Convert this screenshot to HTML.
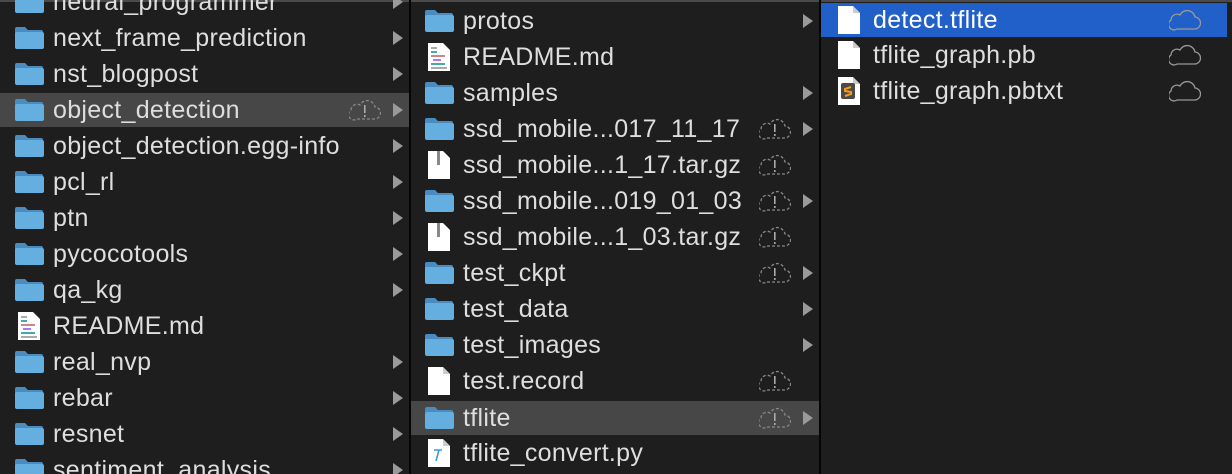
<!DOCTYPE html>
<html><head><meta charset="utf-8"><style>
html,body{margin:0;width:1232px;height:474px;overflow:hidden}
body{background:#1e1e1e;font-family:"Liberation Sans",sans-serif;position:relative}
.top{position:absolute;left:0;top:0;width:1232px;height:2px;background:#4a4a4a}
.div{position:absolute;top:0;width:2px;height:474px;background:#050505}
.r{position:absolute;height:34px;color:#dedede;font-size:25px;letter-spacing:0.3px;line-height:34px;white-space:nowrap}
.r svg{position:absolute}
.r .t{position:absolute;top:0}
.sel{background:#474747}
.blue{background:#2160c8;color:#fff}
.col{position:absolute;top:0;height:474px;overflow:hidden}
</style></head><body>
<svg width="0" height="0" style="position:absolute">
<defs>
<symbol id="f" viewBox="0 0 30 24"><path d="M1 3a2 2 0 0 1 2-2h8l3 3h13a2 2 0 0 1 2 2v2H1z" fill="#4a8cbf"/><rect x="1" y="6" width="29" height="17" rx="2" fill="#65aee0"/></symbol>
<symbol id="d" viewBox="0 0 22 28"><path d="M0 0h15l7 7v21H0z" fill="#fff"/><path d="M15 0v7h7" fill="#ccc"/></symbol>
<symbol id="md" viewBox="0 0 22 28"><path d="M0 0h15l7 7v21H0z" fill="#fff"/><rect x="3" y="4" width="6" height="2" fill="#aaa"/><rect x="3" y="8" width="6" height="2" fill="#4aa"/><rect x="3" y="12" width="14" height="2" fill="#c88"/><rect x="5" y="16" width="8" height="2" fill="#a7f"/><rect x="3" y="20" width="14" height="2" fill="#4aa"/><rect x="3" y="24" width="16" height="2" fill="#aaa"/></symbol>
<symbol id="z" viewBox="0 0 22 28"><path d="M0 0h15l7 7v21H0z" fill="#fff"/><rect x="9" y="0" width="3" height="14" fill="#888"/></symbol>
<symbol id="c" viewBox="0 0 32 22"><path d="M8 20h17a6 6 0 0 0 1-12 8 8 0 0 0-15-2 6 6 0 0 0-9 5 5 5 0 0 0 6 9z" fill="none" stroke="#888" stroke-width="1.3" stroke-dasharray="3 2"/><rect x="15" y="6" width="1.6" height="8" fill="#aaa"/><rect x="15" y="16" width="1.6" height="2" fill="#aaa"/></symbol>
<symbol id="cc" viewBox="0 0 32 22"><path d="M8 20h17a6 6 0 0 0 1-12 8 8 0 0 0-15-2 6 6 0 0 0-9 5 5 5 0 0 0 6 9z" fill="none" stroke="#999" stroke-width="1.3"/></symbol>
<symbol id="a" viewBox="0 0 10 14"><path d="M0 0l10 7-10 7z" fill="#9a9a9a"/></symbol>
</defs></svg>
<div class="top"></div>
<div class="div" style="left:409px"></div>
<div class="div" style="left:819px"></div>

<div class="col" style="left:0;width:409px">
<div class="r" style="left:0;top:-15px;width:409px"><svg style="left:14px;top:5px" width="30" height="24"><use href="#f"/></svg><span class="t" style="left:53px">neural_programmer</span><svg style="left:393px;top:10px" width="10" height="14"><use href="#a"/></svg></div>
<div class="r" style="left:0;top:21px;width:409px"><svg style="left:14px;top:5px" width="30" height="24"><use href="#f"/></svg><span class="t" style="left:53px">next_frame_prediction</span><svg style="left:393px;top:10px" width="10" height="14"><use href="#a"/></svg></div>
<div class="r" style="left:0;top:57px;width:409px"><svg style="left:14px;top:5px" width="30" height="24"><use href="#f"/></svg><span class="t" style="left:53px">nst_blogpost</span><svg style="left:393px;top:10px" width="10" height="14"><use href="#a"/></svg></div>
<div class="r sel" style="left:0;top:93px;width:409px"><svg style="left:14px;top:5px" width="30" height="24"><use href="#f"/></svg><span class="t" style="left:53px">object_detection</span><svg style="left:349px;top:6px" width="32" height="22"><use href="#c"/></svg><svg style="left:393px;top:10px" width="10" height="14"><use href="#a"/></svg></div>
<div class="r" style="left:0;top:129px;width:409px"><svg style="left:14px;top:5px" width="30" height="24"><use href="#f"/></svg><span class="t" style="left:53px">object_detection.egg-info</span><svg style="left:393px;top:10px" width="10" height="14"><use href="#a"/></svg></div>
<div class="r" style="left:0;top:165px;width:409px"><svg style="left:14px;top:5px" width="30" height="24"><use href="#f"/></svg><span class="t" style="left:53px">pcl_rl</span><svg style="left:393px;top:10px" width="10" height="14"><use href="#a"/></svg></div>
<div class="r" style="left:0;top:201px;width:409px"><svg style="left:14px;top:5px" width="30" height="24"><use href="#f"/></svg><span class="t" style="left:53px">ptn</span><svg style="left:393px;top:10px" width="10" height="14"><use href="#a"/></svg></div>
<div class="r" style="left:0;top:237px;width:409px"><svg style="left:14px;top:5px" width="30" height="24"><use href="#f"/></svg><span class="t" style="left:53px">pycocotools</span><svg style="left:393px;top:10px" width="10" height="14"><use href="#a"/></svg></div>
<div class="r" style="left:0;top:273px;width:409px"><svg style="left:14px;top:5px" width="30" height="24"><use href="#f"/></svg><span class="t" style="left:53px">qa_kg</span><svg style="left:393px;top:10px" width="10" height="14"><use href="#a"/></svg></div>
<div class="r" style="left:0;top:309px;width:409px"><svg style="left:18px;top:3px" width="22" height="28"><use href="#md"/></svg><span class="t" style="left:53px">README.md</span></div>
<div class="r" style="left:0;top:345px;width:409px"><svg style="left:14px;top:5px" width="30" height="24"><use href="#f"/></svg><span class="t" style="left:53px">real_nvp</span><svg style="left:393px;top:10px" width="10" height="14"><use href="#a"/></svg></div>
<div class="r" style="left:0;top:381px;width:409px"><svg style="left:14px;top:5px" width="30" height="24"><use href="#f"/></svg><span class="t" style="left:53px">rebar</span><svg style="left:393px;top:10px" width="10" height="14"><use href="#a"/></svg></div>
<div class="r" style="left:0;top:417px;width:409px"><svg style="left:14px;top:5px" width="30" height="24"><use href="#f"/></svg><span class="t" style="left:53px">resnet</span><svg style="left:393px;top:10px" width="10" height="14"><use href="#a"/></svg></div>
<div class="r" style="left:0;top:453px;width:409px"><svg style="left:14px;top:5px" width="30" height="24"><use href="#f"/></svg><span class="t" style="left:53px">sentiment_analysis</span><svg style="left:393px;top:10px" width="10" height="14"><use href="#a"/></svg></div>
</div>

<div class="col" style="left:411px;width:408px">
<div class="r" style="left:0;top:4px;width:408px"><svg style="left:13px;top:5px" width="30" height="24"><use href="#f"/></svg><span class="t" style="left:52px">protos</span><svg style="left:392px;top:10px" width="10" height="14"><use href="#a"/></svg></div>
<div class="r" style="left:0;top:40px;width:408px"><svg style="left:17px;top:3px" width="22" height="28"><use href="#md"/></svg><span class="t" style="left:52px">README.md</span></div>
<div class="r" style="left:0;top:76px;width:408px"><svg style="left:13px;top:5px" width="30" height="24"><use href="#f"/></svg><span class="t" style="left:52px">samples</span><svg style="left:392px;top:10px" width="10" height="14"><use href="#a"/></svg></div>
<div class="r" style="left:0;top:112px;width:408px"><svg style="left:13px;top:5px" width="30" height="24"><use href="#f"/></svg><span class="t" style="left:52px">ssd_mobile...017_11_17</span><svg style="left:348px;top:6px" width="32" height="22"><use href="#c"/></svg><svg style="left:392px;top:10px" width="10" height="14"><use href="#a"/></svg></div>
<div class="r" style="left:0;top:148px;width:408px"><svg style="left:17px;top:3px" width="22" height="28"><use href="#z"/></svg><span class="t" style="left:52px">ssd_mobile...1_17.tar.gz</span><svg style="left:348px;top:6px" width="32" height="22"><use href="#c"/></svg></div>
<div class="r" style="left:0;top:184px;width:408px"><svg style="left:13px;top:5px" width="30" height="24"><use href="#f"/></svg><span class="t" style="left:52px">ssd_mobile...019_01_03</span><svg style="left:348px;top:6px" width="32" height="22"><use href="#c"/></svg><svg style="left:392px;top:10px" width="10" height="14"><use href="#a"/></svg></div>
<div class="r" style="left:0;top:220px;width:408px"><svg style="left:17px;top:3px" width="22" height="28"><use href="#z"/></svg><span class="t" style="left:52px">ssd_mobile...1_03.tar.gz</span><svg style="left:348px;top:6px" width="32" height="22"><use href="#c"/></svg></div>
<div class="r" style="left:0;top:256px;width:408px"><svg style="left:13px;top:5px" width="30" height="24"><use href="#f"/></svg><span class="t" style="left:52px">test_ckpt</span><svg style="left:348px;top:6px" width="32" height="22"><use href="#c"/></svg><svg style="left:392px;top:10px" width="10" height="14"><use href="#a"/></svg></div>
<div class="r" style="left:0;top:292px;width:408px"><svg style="left:13px;top:5px" width="30" height="24"><use href="#f"/></svg><span class="t" style="left:52px">test_data</span><svg style="left:392px;top:10px" width="10" height="14"><use href="#a"/></svg></div>
<div class="r" style="left:0;top:328px;width:408px"><svg style="left:13px;top:5px" width="30" height="24"><use href="#f"/></svg><span class="t" style="left:52px">test_images</span><svg style="left:392px;top:10px" width="10" height="14"><use href="#a"/></svg></div>
<div class="r" style="left:0;top:364px;width:408px"><svg style="left:17px;top:3px" width="22" height="28"><use href="#d"/></svg><span class="t" style="left:52px">test.record</span><svg style="left:348px;top:6px" width="32" height="22"><use href="#c"/></svg></div>
<div class="r sel" style="left:0;top:401px;width:408px"><svg style="left:13px;top:5px" width="30" height="24"><use href="#f"/></svg><span class="t" style="left:52px">tflite</span><svg style="left:348px;top:6px" width="32" height="22"><use href="#c"/></svg><svg style="left:392px;top:10px" width="10" height="14"><use href="#a"/></svg></div>
<div class="r" style="left:0;top:436px;width:408px"><svg style="left:17px;top:3px" width="22" height="28"><use href="#d"/></svg><svg style="left:22px;top:12px" width="10" height="14"><path d="M1 2h8M6 2l-3 11" stroke="#3a9ae0" stroke-width="1.6" fill="none"/></svg><span class="t" style="left:52px">tflite_convert.py</span></div>
</div>

<div class="col" style="left:821px;width:411px">
<div class="r blue" style="left:0;top:3px;width:406px"><svg style="left:17px;top:3px" width="22" height="28"><use href="#d"/></svg><span class="t" style="left:52px">detect.tflite</span><svg style="left:348px;top:6px" width="32" height="22"><use href="#cc"/></svg></div>
<div class="r" style="left:0;top:38px;width:406px"><svg style="left:17px;top:3px" width="22" height="28"><use href="#d"/></svg><span class="t" style="left:52px">tflite_graph.pb</span><svg style="left:348px;top:6px" width="32" height="22"><use href="#cc"/></svg></div>
<div class="r" style="left:0;top:74px;width:406px"><svg style="left:17px;top:3px" width="22" height="28"><use href="#d"/></svg><svg style="left:20px;top:9px" width="14" height="16"><rect width="14" height="16" rx="2" fill="#4a4a4a"/><path d="M10 4L4 6v2l6 1v2L4 13" stroke="#f59a1a" stroke-width="2" fill="none"/></svg><span class="t" style="left:52px">tflite_graph.pbtxt</span><svg style="left:348px;top:6px" width="32" height="22"><use href="#cc"/></svg></div>
</div>
</body></html>
